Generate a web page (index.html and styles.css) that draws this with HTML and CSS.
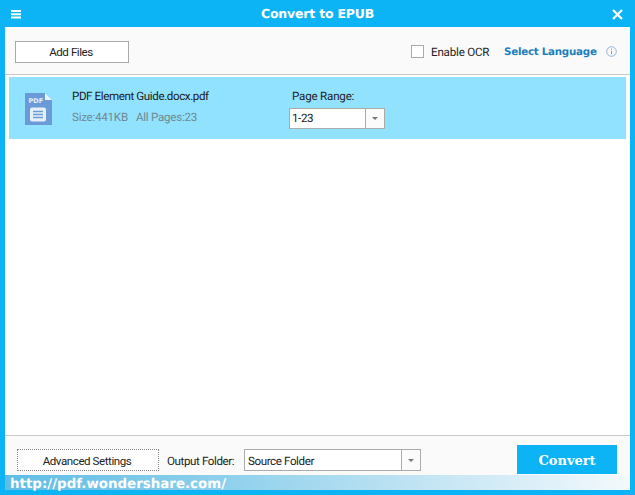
FILE: index.html
```html
<!DOCTYPE html>
<html lang="en">
<head>
<meta charset="utf-8">
<title>Convert to EPUB</title>
<link rel="stylesheet" href="styles.css">
</head>
<body>
<div class="window">
  <header class="titlebar">
    <svg class="menu-icon" width="12" height="10" viewBox="0 0 12 10"><path d="M1 1h10v2H1zM1 4.3h10v2H1zM1 7.6h10v2H1z" fill="#fff"/></svg>
    <span class="title">Convert to EPUB</span>
    <svg class="close-icon" width="11" height="11" viewBox="0 0 11 11"><path d="M1 1l9 9M10 1l-9 9" stroke="#fff" stroke-width="2.2" fill="none"/></svg>
  </header>
  <main class="content">
    <div class="toolbar">
      <button class="btn add-btn">Add Files</button>
      <div class="ocr">
        <span class="checkbox"></span>
        <span class="ocr-label">Enable OCR</span>
        <a class="lang">Select Language</a>
        <svg class="info" width="11" height="11" viewBox="0 0 11 11"><circle cx="5.5" cy="5.5" r="4.8" fill="none" stroke="#8fb4d8"/><path d="M5.5 2.6v1.2M5.5 4.8v3.4" stroke="#6f9fd0" fill="none"/></svg>
      </div>
    </div>
    <div class="list">
      <div class="row">
        <svg class="pdf-icon" width="27" height="32" viewBox="0 0 27 32">
          <path d="M0 0h20l7 7v25H0z" fill="#6a9bd8"/>
          <path d="M20 0l7 7h-7z" fill="#e8f6fd"/>
          <rect x="5" y="14.500" width="16" height="14" rx="2" fill="#e6f0fa"/>
          <path d="M8 18.500h10M8 21.500h10M8 24.500h10" stroke="#6a9bd8" stroke-width="1.500"/>
          <text x="3.500" y="9.500" class="pdf-text">PDF</text>
        </svg>
        <div class="file-info">
          <div class="file-name">PDF Element Guide.docx.pdf</div>
          <div class="file-meta"><span>Size:441KB</span><span>All Pages:23</span></div>
        </div>
        <div class="range">
          <div class="range-label">Page Range:</div>
          <div class="combo range-combo"><span class="combo-value">1-23</span><span class="combo-arrow"><i></i></span></div>
        </div>
      </div>
    </div>
    <footer class="footer">
      <button class="btn adv-btn">Advanced Settings</button>
      <span class="output-label">Output Folder:</span>
      <div class="combo folder-combo"><span class="combo-value">Source Folder</span><span class="combo-arrow"><i></i></span></div>
      <button class="convert">Convert</button>
    </footer>
  </main>
  <div class="watermark">http://pdf.wondershare.com/</div>
</div>
</body>
</html>
```

FILE: styles.css
```css
* { box-sizing: border-box; }
html, body { margin: 0; padding: 0; }
body { width: 635px; height: 495px; overflow: hidden; font-family: Roboto, "Liberation Sans", sans-serif; font-size: 11.6px; letter-spacing: -0.4px; color: #222; text-rendering: geometricPrecision; white-space: nowrap; }
.window { position: relative; width: 635px; height: 495px; background: #0db4f5; padding: 0 5px 5px; display: flex; flex-direction: column; }
.titlebar { height: 27px; flex: none; display: flex; align-items: center; justify-content: center; position: relative; margin: 0 -5px; }
.title { font-family: "DejaVu Sans", sans-serif; font-weight: 700; font-size: 12.5px; color: #fff; letter-spacing: -0.2px; }
.menu-icon { position: absolute; left: 10px; top: 9px; }
.close-icon { position: absolute; left: 612px; top: 9px; }
.content { flex: 1; background: #fff; display: flex; flex-direction: column; min-height: 0; }
.toolbar { height: 48px; flex: none; background: #fafafa; border-bottom: 1px solid #c9c9c9; display: flex; align-items: center; justify-content: space-between; padding: 2px 13px 0 10px; }
.btn { background: #fff; border: 1px solid #a9a9a9; font: inherit; letter-spacing: -0.45px; color: #222; padding: 0; }
.add-btn { width: 114px; height: 22px; padding-right: 2px; }
.ocr { display: flex; align-items: center; }
.checkbox { width: 13px; height: 13px; background: #fff; border: 1px solid #ababab; margin-right: 7px; }
.ocr-label { width: 73px; flex: none; letter-spacing: -0.2px; }
.lang { font-family: "DejaVu Sans", sans-serif; font-weight: 700; font-size: 10.3px; color: #1a80bd; letter-spacing: -0.25px; width: 102px; flex: none; }
.info { display: block; }
.list { flex: 1; padding: 2px 4px 0; min-height: 0; }
.row { height: 62px; background: #91e2ff; display: flex; position: relative; }
.pdf-icon { margin: 16px 0 0 16px; flex: none; }
.pdf-text { font-family: "DejaVu Sans", sans-serif; font-size: 6.5px; font-weight: 700; letter-spacing: 0; fill: #e6f0fa; }
.file-info { margin: 11px 0 0 20px; width: 217px; flex: none; }
.file-name { line-height: 16px; color: #1c1c1c; }
.file-meta { line-height: 16px; margin-top: 5px; color: #6f8894; display: flex; gap: 8px; letter-spacing: -0.25px; }
.range { margin-top: 11px; }
.range-label { line-height: 16px; padding-left: 3px; margin-bottom: 4px; letter-spacing: -0.2px; }
.combo { display: flex; background: #fff; border: 1px solid #ababab; height: 21px; }
.combo-value { flex: 1; line-height: 19px; padding-left: 2px; }
.combo-arrow { width: 19px; flex: none; border-left: 1px solid #ababab; background: #fbfbfb; display: flex; align-items: center; justify-content: center; }
.combo-arrow i { display: block; width: 0; height: 0; border-left: 3px solid transparent; border-right: 3px solid transparent; border-top: 3px solid #777; }
.range-combo { width: 96px; }
.footer { height: 55px; flex: none; background: #fafafa; border-top: 1px solid #c9c9c9; display: flex; align-items: flex-start; padding: 13px 13px 0 12px; }
.adv-btn { width: 142px; height: 22px; border: 1px dotted #888; margin-right: 8px; padding: 1px 2px 0 0; }
.output-label { line-height: 24px; width: 77px; flex: none; }
.folder-combo { width: 177px; height: 22px; }
.folder-combo .combo-value { line-height: 22px; padding-left: 3px; }
.convert { width: 100px; height: 29px; margin: -4px 0 0 auto; background: #0db4f5; border: 0; color: #fff; font-family: "DejaVu Serif", serif; font-weight: 700; font-size: 13px; letter-spacing: 0; padding: 2px 0 0; }
.watermark { position: absolute; left: 5px; top: 475px; width: 625px; height: 15px; background: linear-gradient(90deg, #5fbde5 0%, #8ed0ec 35%, #bfe3f3 65%, #f3f9fc 100%); color: #fff; font-family: "DejaVu Sans", sans-serif; font-weight: 700; font-size: 13.4px; letter-spacing: 0; line-height: 20px; padding-left: 5px; white-space: nowrap; }
```
